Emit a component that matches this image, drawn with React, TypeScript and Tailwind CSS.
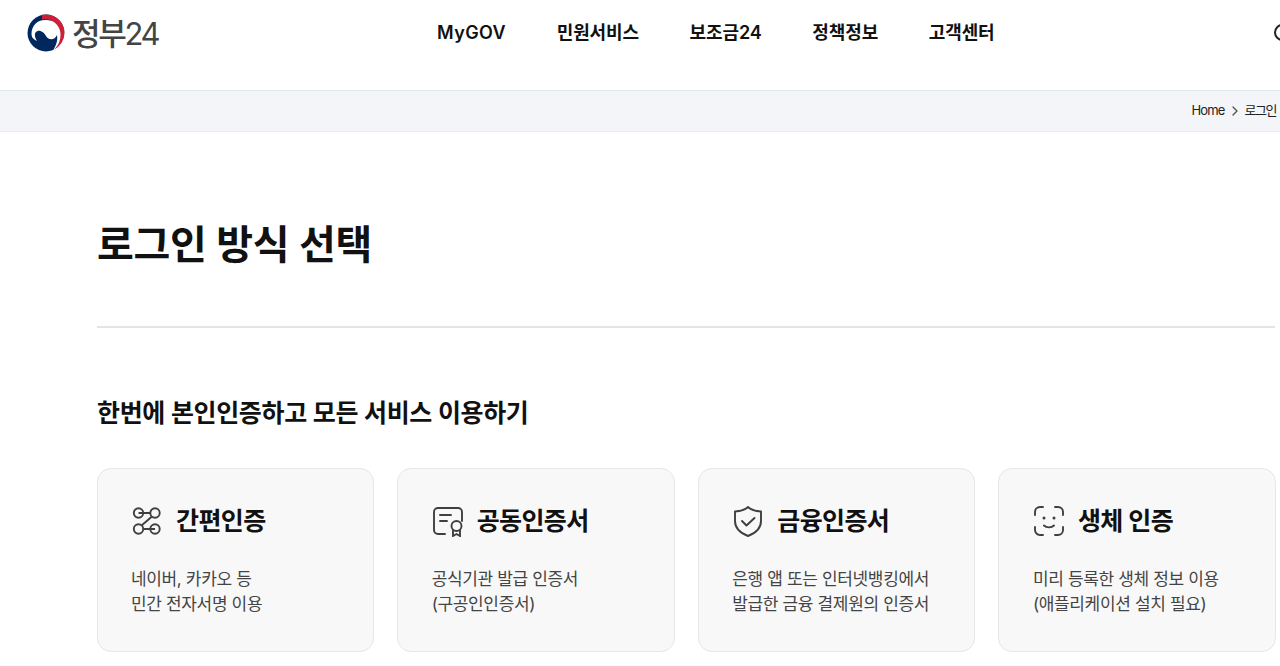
import { ChevronRight } from "lucide-react";

const fontFamily = { fontFamily: "Inter, 'Noto Sans CJK KR', sans-serif" };

const Logo = () => (
  <div className="flex items-center gap-[7px]">
    <svg width="38" height="38" viewBox="0 0 38 38">
      <circle cx="19" cy="19" r="18.500" fill="#00285f" />
      <path
        d="M4.500 20C4.500 12 10 6 18 6C27 6 38 10 38 21C38 30 33 36 26 37C29 31 31 27 30 21C28 26 22 27 19 22C17 18 12 15 9 18C7 20 8 24 10 27C6 25 4.500 23 4.500 20z"
        fill="#fff"
      />
      <path d="M15 1A18.500 18.500 0 0 1 37.500 19A18.500 18.500 0 0 1 27 35.700A20 20 0 0 0 33.500 20A15.500 15.500 0 0 0 15 5.500z" fill="#cd1f3a" />
    </svg>
    <span className="text-[31px] leading-none tracking-[-2.3px] text-[#444]">
      <span className="font-medium">정부</span>24
    </span>
  </div>
);

const EasyIcon = () => (
  <svg width="32" height="32" viewBox="0 0 32 32" fill="none" stroke="#3f3f3f" strokeWidth="1.900">
    <circle cx="7.500" cy="8" r="4.700" />
    <circle cx="24" cy="8" r="4.700" />
    <circle cx="7.500" cy="24" r="4.700" />
    <circle cx="24" cy="24" r="4.700" />
    <path d="M7.500 8H19.500M24 24H12M21 11.500 10.500 20.500" />
  </svg>
);

const CertIcon = () => (
  <svg width="32" height="32" viewBox="0 0 32 32" fill="none" stroke="#3f3f3f" strokeWidth="1.900" strokeLinecap="round">
    <path d="M13 29H6a4 4 0 0 1-4-4V7a4 4 0 0 1 4-4h20a4 4 0 0 1 4 4v9" />
    <path d="M8 10h11M8 16h7" />
    <circle cx="24.500" cy="21" r="5" />
    <path d="M21 25v6l3.500-2 3.500 2v-6" />
  </svg>
);

const ShieldIcon = () => (
  <svg width="32" height="32" viewBox="0 0 32 32" fill="none" stroke="#3f3f3f" strokeWidth="1.900" strokeLinejoin="round" strokeLinecap="round">
    <path d="M16 2c3 3 7 4 13 4.500V16c0 7-5 12-13 15C8 28 3 23 3 16V6.500C9 6 13 5 16 2z" />
    <path d="m10 16 4.500 4.500L22.500 13" />
  </svg>
);

const FaceIcon = () => (
  <svg width="32" height="32" viewBox="0 0 32 32" fill="none" stroke="#3f3f3f" strokeWidth="1.900" strokeLinecap="round">
    <path d="M2 10V7a5 5 0 0 1 5-5h3M22 2h3a5 5 0 0 1 5 5v3M30 22v3a5 5 0 0 1-5 5h-3M10 30H7a5 5 0 0 1-5-5v-3" />
    <path d="M11 20.500c2.500 2.500 7.500 2.500 10 0" />
    <circle cx="11" cy="13" r="1.500" fill="#3f3f3f" stroke="none" />
    <circle cx="21" cy="13" r="1.500" fill="#3f3f3f" stroke="none" />
  </svg>
);

const cards = [
  { title: "간편인증", icon: <EasyIcon />, lines: ["네이버, 카카오 등", "민간 전자서명 이용"] },
  { title: "공동인증서", icon: <CertIcon />, lines: ["공식기관 발급 인증서", "(구공인인증서)"] },
  { title: "금융인증서", icon: <ShieldIcon />, lines: ["은행 앱 또는 인터넷뱅킹에서", "발급한 금융 결제원의 인증서"] },
  { title: "생체 인증", icon: <FaceIcon />, lines: ["미리 등록한 생체 정보 이용", "(애플리케이션 설치 필요)"] },
];

const navItems = ["MyGOV", "민원서비스", "보조금24", "정책정보", "고객센터"];

export default function App() {
  return (
    <div className="h-[666px] w-[1280px] overflow-hidden bg-white" style={fontFamily}>
      {/* Header */}
      <header className="flex h-[91px] items-start border-b border-[#e4e6ee] pl-[27px]">
        <div className="mt-[14px] w-[410px] shrink-0">
          <Logo />
        </div>
        <nav className="mt-[20px] flex w-[837px] shrink-0 gap-[50.600px]">
          {navItems.map((item) => (
            <a
              key={item}
              className="text-[18px] leading-[26px] font-semibold tracking-[-0.1px] whitespace-nowrap text-[#111] first:tracking-[0.4px]"
            >
              {item}
            </a>
          ))}
        </nav>
        <div className="mt-[24px] h-[17px] w-[17px] shrink-0 rounded-full border-2 border-[#222]" />
      </header>

      {/* Breadcrumb */}
      <div className="flex h-[41px] items-center justify-end gap-[2px] border-b border-[#e9ebf1] bg-[#f4f5f9] pr-[4px] text-[13px] tracking-[-0.8px] text-[#222]">
        <span>Home</span>
        <ChevronRight className="h-[16px] w-[16px] text-[#555]" />
        <span className="tracking-[-1.5px]">로그인</span>
      </div>

      {/* Main */}
      <main className="pr-[5px] pl-[97px]">
        <h1 className="mt-[85px] text-[40px] leading-[56px] font-semibold tracking-[-0.3px] text-[#111]">
          로그인 방식 선택
        </h1>
        <hr className="mt-[53px] border-t-2 border-[#e4e4e4]" />
        <h2 className="mt-[68px] text-[25px] leading-[34px] font-semibold tracking-[-0.35px] text-[#111]">
          한번에 본인인증하고 모든 서비스 이용하기
        </h2>
        <div className="-mr-[1px] -ml-[0.500px] mt-[38px] grid grid-cols-4 gap-[23px]">
          {cards.map((card) => (
            <div
              key={card.title}
              className="h-[184px] rounded-[14px] border border-[#e6e6e6] bg-[#f8f8f8] pt-[36px] pl-[33.500px]"
            >
              <div className="flex items-center gap-[13px]">
                {card.icon}
                <span className="text-[25px] leading-[32px] font-semibold tracking-[-0.6px] text-[#111]">{card.title}</span>
              </div>
              <p className="mt-[30px] text-[17px] leading-[25px] tracking-[-0.35px] text-[#444]">
                {card.lines[0]}
                <br />
                {card.lines[1]}
              </p>
            </div>
          ))}
        </div>
      </main>
    </div>
  );
}
